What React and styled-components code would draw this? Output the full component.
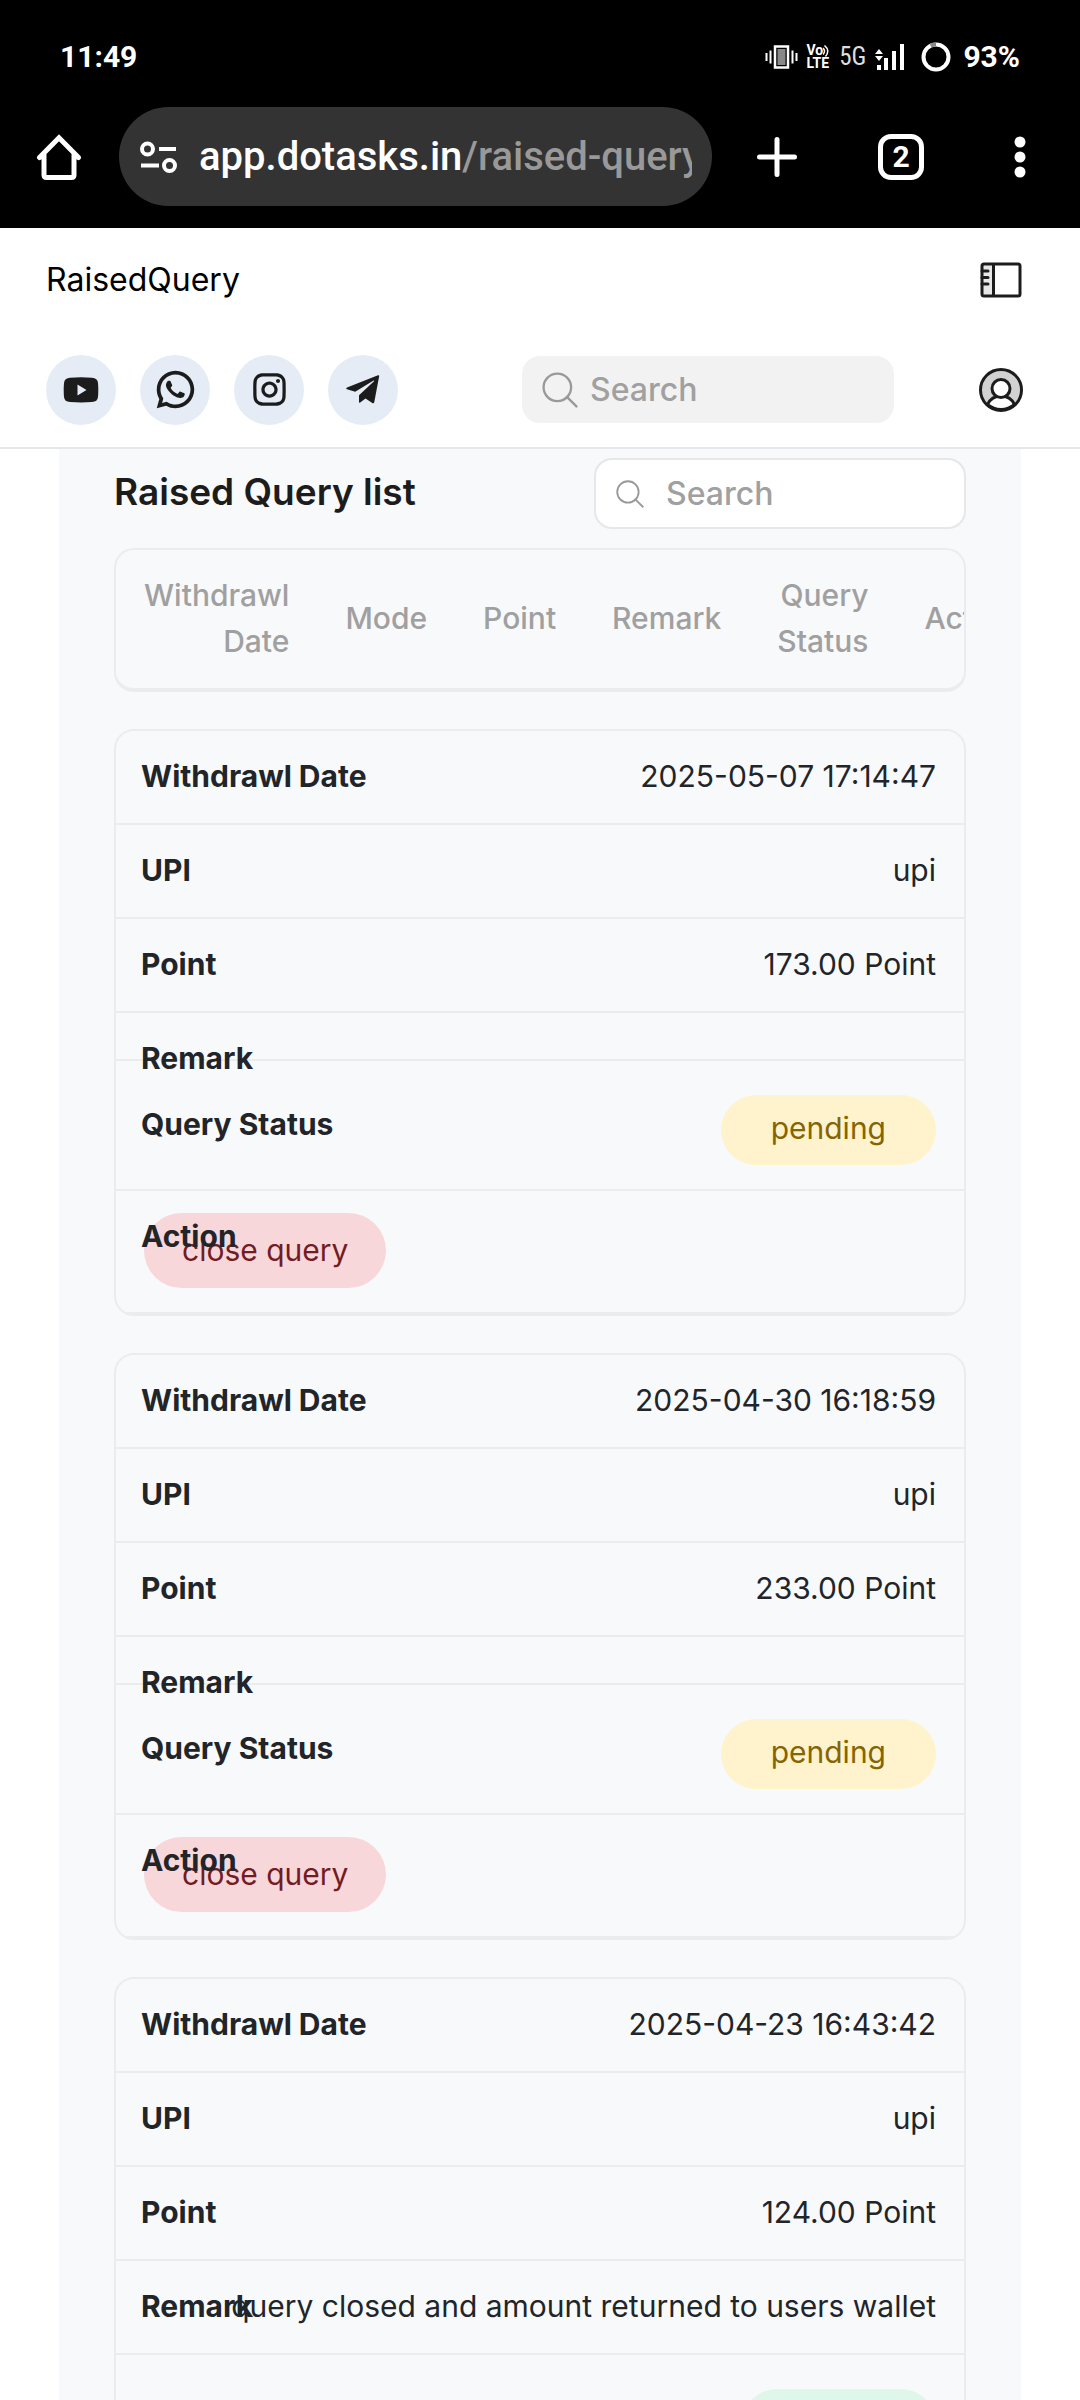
import React from "react";
import styled, { createGlobalStyle } from "styled-components";
import { RiInstagramLine, RiWhatsappLine } from "react-icons/ri";

const GlobalStyle = createGlobalStyle`
  * {
    box-sizing: border-box;
  }
  body {
    margin: 0;
    background: #fff;
    color: #212529;
    font-family: Inter, Roboto, sans-serif;
    font-size: 30px;
    line-height: 46px;
  }
  button,
  input {
    font: inherit;
    color: inherit;
  }
`;

const Shell = styled.div`
  display: flex;
  flex-direction: column;
  height: 100vh;
  overflow: hidden;
`;

const Chrome = styled.div`
  background: #000;
  color: #fff;
  font-family: Roboto, sans-serif;
  padding-bottom: 22px;
`;

const StatusBar = styled.div`
  display: flex;
  align-items: center;
  height: 107px;
  padding: 30px 60px 23px;
  font-size: 30px;
  font-weight: 700;
`;

const StatusIcons = styled.div`
  display: flex;
  align-items: center;
  gap: 9px;
  margin-left: auto;
`;

const Volte = styled.span`
  display: flex;
  flex-direction: column;
  font-size: 14px;
  line-height: 13px;
`;

const VolteTop = styled.span`
  display: flex;
  align-items: center;
`;

const Network = styled.span`
  font-family: "Roboto Condensed", Roboto, sans-serif;
  font-size: 25px;
  font-weight: 400;
  color: #ddd;
`;

const Battery = styled.span`
  display: flex;
  align-items: center;
  gap: 12px;
  margin-left: 8px;
`;

const Toolbar = styled.div`
  display: flex;
  align-items: center;
  padding: 0 45px 0 36px;
`;

const IconButton = styled.button`
  display: flex;
  flex: none;
  align-items: center;
  justify-content: center;
  width: ${props => props.$width}px;
  padding: 0;
  border: 0;
  background: transparent;
  cursor: pointer;
`;

const AddressBar = styled.button`
  display: flex;
  flex: 1;
  align-items: center;
  min-width: 0;
  height: 99px;
  margin: 0 45px 0 37px;
  padding: 0 20px;
  gap: 22px;
  border: 0;
  border-radius: 50px;
  background: #333;
  text-align: left;
`;

const Url = styled.span`
  flex: 1;
  overflow: hidden;
  white-space: nowrap;
  font-size: 40px;
  font-weight: 500;
  line-height: 60px;
  color: #999;
  b {
    font-weight: 500;
    color: #fff;
  }
`;

const ToolbarActions = styled.div`
  display: flex;
  align-items: center;
  gap: 81px;
`;

const Tabs = styled.span`
  display: flex;
  align-items: center;
  justify-content: center;
  width: 46px;
  height: 46px;
  border: 5px solid #fff;
  border-radius: 13px;
  font-size: 30px;
  font-weight: 700;
`;

const Header = styled.header`
  flex: none;
  border-bottom: 2px solid #e6e7e8;
`;

const HeaderRow = styled.div`
  display: flex;
  align-items: center;
  height: ${props => props.$height}px;
  padding: 0 57px 0 46px;
`;

const PageName = styled.span`
  flex: 1;
  font-size: 32px;
  color: #000;
`;

const Socials = styled.nav`
  display: flex;
  gap: 24px;
`;

const SocialLink = styled.a`
  display: flex;
  align-items: center;
  justify-content: center;
  width: 70px;
  height: 70px;
  border-radius: 50%;
  background: #e5ecf6;
  color: #1c1c1c;
`;

const SearchBox = styled.label`
  display: flex;
  align-items: center;
  width: 372px;
  height: ${props => (props.$outlined ? 71 : 67)}px;
  margin-left: auto;
  padding: 0 20px;
  gap: ${props => (props.$outlined ? 22 : 12)}px;
  border: ${props => (props.$outlined ? "2px solid #e6e7e8" : "0")};
  border-radius: 18px;
  background: ${props => (props.$outlined ? "#fff" : "#f2f2f2")};
`;

const SearchInput = styled.input`
  flex: 1;
  min-width: 0;
  padding: 0;
  border: 0;
  outline: 0;
  background: transparent;
  font-size: 32px;
  font-weight: 500;
  &::placeholder {
    color: #a0a0a0;
    opacity: 1;
  }
`;

const ProfileSlot = styled.div`
  margin-left: 85px;
`;

const Panel = styled.main`
  flex: 1;
  min-height: 0;
  margin: 0 59px;
  padding: 9px 55px 0;
  overflow: auto;
  scrollbar-width: none;
  background: #f8f9fb;
`;

const PanelHead = styled.div`
  display: flex;
  align-items: center;
  margin-bottom: 19px;
`;

const Title = styled.h1`
  margin: 0;
  padding-bottom: 4px;
  font-size: 37px;
  font-weight: 600;
  color: #1c1c1c;
`;

const Table = styled.table`
  display: block;
  text-align: right;
  thead,
  tbody {
    display: block;
  }
`;

const Card = styled.tr`
  display: block;
  margin-bottom: 37px;
  overflow: hidden;
  border: 2px solid #ebecee;
  border-radius: 20px;
`;

const HeadCard = styled(Card)`
  display: flex;
  align-items: center;
  border-bottom-width: 4px;
`;

const HeadCell = styled.th`
  flex: none;
  width: min-content;
  padding: 22px 28px 24px;
  font-weight: 500;
  color: #a0a0a0;
`;

/* the label and the value share one grid cell, so an empty value collapses the row */
const Cell = styled.td`
  display: grid;
  padding: 22px 28px 24px 25px;
  border-bottom: 2px solid #ebecee;
`;

const Label = styled.span`
  grid-area: 1 / 1;
  justify-self: start;
  align-self: ${props => (props.$center ? "center" : "start")};
  z-index: 1;
  height: ${props => (props.$center ? 46 : 0)}px;
  font-weight: 700;
`;

const Value = styled.span`
  grid-area: 1 / 1;
  justify-self: end;
`;

const tones = {
  pending: { background: "#fff3cd", color: "#856404" },
  closed: { background: "#dff6ea", color: "#1f7a4d" }
};

const StatusPill = styled.span`
  grid-area: 1 / 1;
  justify-self: end;
  margin-top: 12px;
  padding: 10px 50px 14px;
  border-radius: 35px;
  background: ${props => tones[props.$status].background};
  color: ${props => tones[props.$status].color};
`;

const CloseButton = styled.button`
  grid-area: 1 / 1;
  justify-self: start;
  height: 75px;
  margin-left: 3px;
  padding: 0 38px 1px;
  border: 0;
  border-radius: 38px;
  background: #f8d7da;
  color: #721c24;
  cursor: pointer;
`;

const columns = [
  "Withdrawl Date",
  "Mode",
  "Point",
  "Remark",
  "Query Status",
  "Action"
];

const queries = [
  {
    date: "2025-05-07 17:14:47",
    mode: "upi",
    point: "173.00 Point",
    remark: "",
    status: "pending"
  },
  {
    date: "2025-04-30 16:18:59",
    mode: "upi",
    point: "233.00 Point",
    remark: "",
    status: "pending"
  },
  {
    date: "2025-04-23 16:43:42",
    mode: "upi",
    point: "124.00 Point",
    remark: "query closed and amount returned to users wallet",
    status: "closed"
  }
];

const SearchIcon = ({ size }) => (
  <svg
    width={size}
    height={size}
    viewBox="0 0 34 34"
    fill="none"
    stroke="#999"
    strokeWidth="2.2"
    strokeLinecap="round"
  >
    <circle cx="14.5" cy="14.5" r="13" />
    <path d="M23.5 23.5 32.5 32.5" />
  </svg>
);

const VibrateIcon = () => (
  <svg width="33" height="24" viewBox="0 0 33 24" fill="none" stroke="#fff">
    <rect x="10" y="1.5" width="13" height="21" strokeWidth="2.5" />
    <rect x="12.5" y="4" width="8" height="16" fill="#888" stroke="none" />
    <path d="M1.5 8v8M5.5 5.5v13M27.5 5.5v13M31.5 8v8" strokeWidth="2" />
  </svg>
);

const WavesIcon = () => (
  <svg width="7" height="12" viewBox="0 0 7 12" fill="none" stroke="#fff">
    <path d="M0 3q3 3 0 6.500M1.500 .5q6 5 1 11" strokeWidth="1.500" />
  </svg>
);

const SignalIcon = () => (
  <svg width="29" height="27" viewBox="0 0 29 27" fill="#fff">
    <path d="M4 5l4 5H0zM4 17l4-5H0z" />
    <path d="M2 21h4v5H2zM9 14h4v12H9zM17 7h4v19h-4zM25 0h4v26h-4z" />
  </svg>
);

const BatteryIcon = () => (
  <svg width="30" height="30" viewBox="0 0 30 30" fill="none" strokeWidth="4">
    <circle cx="15" cy="15" r="12.5" stroke="#fff" />
    <path d="M9.7 3.7A12.5 12.5 0 0 1 15 2.5" stroke="#888" />
  </svg>
);

const HomeIcon = () => (
  <svg
    width="46"
    height="46"
    viewBox="0 0 46 46"
    fill="none"
    stroke="#fff"
    strokeWidth="5"
    strokeLinecap="round"
  >
    <path d="M3.5 23.5 23 3.8 42.500 23.500M8 20v21q0 2.500 2.500 2.500h25q2.500 0 2.500-2.500V20" />
  </svg>
);

const TuneIcon = () => (
  <svg
    width="38"
    height="34"
    viewBox="0 0 38 34"
    fill="none"
    stroke="#fff"
    strokeWidth="4"
  >
    <circle cx="8.5" cy="9" r="5.5" />
    <path d="M20 9h17M2 25.5h18" />
    <circle cx="30.5" cy="25.5" r="5.5" />
  </svg>
);

const PlusIcon = () => (
  <svg
    width="40"
    height="40"
    viewBox="0 0 40 40"
    stroke="#fff"
    strokeWidth="5"
    strokeLinecap="round"
  >
    <path d="M20 2.5v35M2.5 20h35" />
  </svg>
);

const DotsIcon = () => (
  <svg width="12" height="42" viewBox="0 0 12 42" fill="#fff">
    <circle cx="6" cy="6" r="5.5" />
    <circle cx="6" cy="21" r="5.5" />
    <circle cx="6" cy="36" r="5.5" />
  </svg>
);

const SidebarIcon = () => (
  <svg width="42" height="36" viewBox="0 0 42 36" fill="none" stroke="#1c1c1c">
    <path d="M2 2h12v32H2z" fill="#e8e8e8" stroke="none" />
    <rect x="2" y="2" width="38" height="32" rx="2" strokeWidth="3" />
    <path d="M13.5 2v32" strokeWidth="3" />
    <path d="M2 9h6M2 15.5h6M2 22h6" strokeWidth="3" strokeLinecap="round" />
  </svg>
);

const ProfileIcon = () => (
  <svg
    width="44"
    height="44"
    viewBox="0 0 44 44"
    fill="#d2d2d2"
    stroke="#1c1c1c"
    strokeWidth="3"
  >
    <circle cx="22" cy="22" r="20.5" />
    <path
      d="M8.5 36.5a15 15 0 0 1 27 0A20.5 20.5 0 0 1 8.5 36.5z"
      fill="#fff"
    />
    <circle cx="22" cy="20.5" r="9" fill="#fff" />
  </svg>
);

const YoutubeIcon = () => (
  <svg width="36" height="26" viewBox="0 0 36 26" fill="currentColor">
    <path
      fillRule="evenodd"
      d="M7 .8Q18-.2 29 .8 34.5 1 35 6q.6 7 0 14-.5 4.800-6 5-11 .8-22 0-5.500-.2-6-5-.6-7 0-14 .5-5 6-5.200zM14.500 7.500v11l9-5.500z"
    />
  </svg>
);

const TelegramIcon = () => (
  <svg width="34" height="30" viewBox="0 0 34 30" fill="currentColor">
    <path d="M32 .3q1.3-.4 1.2.8L28.3 27q-.4 1.8-2 .9L19.5 23.5l-5.3 4q-1.2.8-1.2-.8v-6.5L28 6.2q.5-1-.8-.5L9.2 16.7 1 14.2q-1.500-.7 0-1.600z" />
  </svg>
);

const BrowserChrome = () => (
  <Chrome>
    <StatusBar>
      <span>11:49</span>
      <StatusIcons>
        <VibrateIcon />
        <Volte>
          <VolteTop>
            Vo
            <WavesIcon />
          </VolteTop>
          <span>LTE</span>
        </Volte>
        <Network>5G</Network>
        <SignalIcon />
        <Battery>
          <BatteryIcon />
          <span>93%</span>
        </Battery>
      </StatusIcons>
    </StatusBar>
    <Toolbar>
      <IconButton $width={46} aria-label="Home">
        <HomeIcon />
      </IconButton>
      <AddressBar>
        <TuneIcon />
        <Url>
          <b>app.dotasks.in</b>/raised-query
        </Url>
      </AddressBar>
      <ToolbarActions>
        <IconButton $width={40} aria-label="New tab">
          <PlusIcon />
        </IconButton>
        <IconButton $width={46} aria-label="Open tabs">
          <Tabs>2</Tabs>
        </IconButton>
        <IconButton $width={30} aria-label="More">
          <DotsIcon />
        </IconButton>
      </ToolbarActions>
    </Toolbar>
  </Chrome>
);

const AppHeader = () => (
  <Header>
    <HeaderRow $height={104}>
      <PageName>RaisedQuery</PageName>
      <IconButton $width={44} aria-label="Toggle sidebar">
        <SidebarIcon />
      </IconButton>
    </HeaderRow>
    <HeaderRow $height={115}>
      <Socials>
        <SocialLink href="#youtube" aria-label="YouTube">
          <YoutubeIcon />
        </SocialLink>
        <SocialLink href="#whatsapp" aria-label="WhatsApp">
          <RiWhatsappLine size={45} />
        </SocialLink>
        <SocialLink href="#instagram" aria-label="Instagram">
          <RiInstagramLine size={39} />
        </SocialLink>
        <SocialLink href="#telegram" aria-label="Telegram">
          <TelegramIcon />
        </SocialLink>
      </Socials>
      <SearchBox>
        <SearchIcon size={36} />
        <SearchInput placeholder="Search" aria-label="Search" />
      </SearchBox>
      <ProfileSlot>
        <IconButton $width={44} aria-label="Profile">
          <ProfileIcon />
        </IconButton>
      </ProfileSlot>
    </HeaderRow>
  </Header>
);

const QueryCard = ({ query }) => (
  <Card>
    <Cell>
      <Label>Withdrawl Date</Label>
      <Value>{query.date}</Value>
    </Cell>
    <Cell>
      <Label>UPI</Label>
      <Value>{query.mode}</Value>
    </Cell>
    <Cell>
      <Label>Point</Label>
      <Value>{query.point}</Value>
    </Cell>
    <Cell>
      <Label>Remark</Label>
      <Value>{query.remark}</Value>
    </Cell>
    <Cell>
      <Label $center>Query Status</Label>
      <StatusPill $status={query.status}>{query.status}</StatusPill>
    </Cell>
    <Cell>
      <Label>Action</Label>
      {query.status === "pending" && <CloseButton>close query</CloseButton>}
    </Cell>
  </Card>
);

const App = () => (
  <Shell>
    <GlobalStyle />
    <BrowserChrome />
    <AppHeader />
    <Panel>
      <PanelHead>
        <Title>Raised Query list</Title>
        <SearchBox $outlined>
          <SearchIcon size={28} />
          <SearchInput placeholder="Search" aria-label="Search queries" />
        </SearchBox>
      </PanelHead>
      <Table>
        <thead>
          <HeadCard>
            {columns.map(column => (
              <HeadCell key={column} scope="col">
                {column}
              </HeadCell>
            ))}
          </HeadCard>
        </thead>
        <tbody>
          {queries.map(query => (
            <QueryCard key={query.date} query={query} />
          ))}
        </tbody>
      </Table>
    </Panel>
  </Shell>
);

export default App;
